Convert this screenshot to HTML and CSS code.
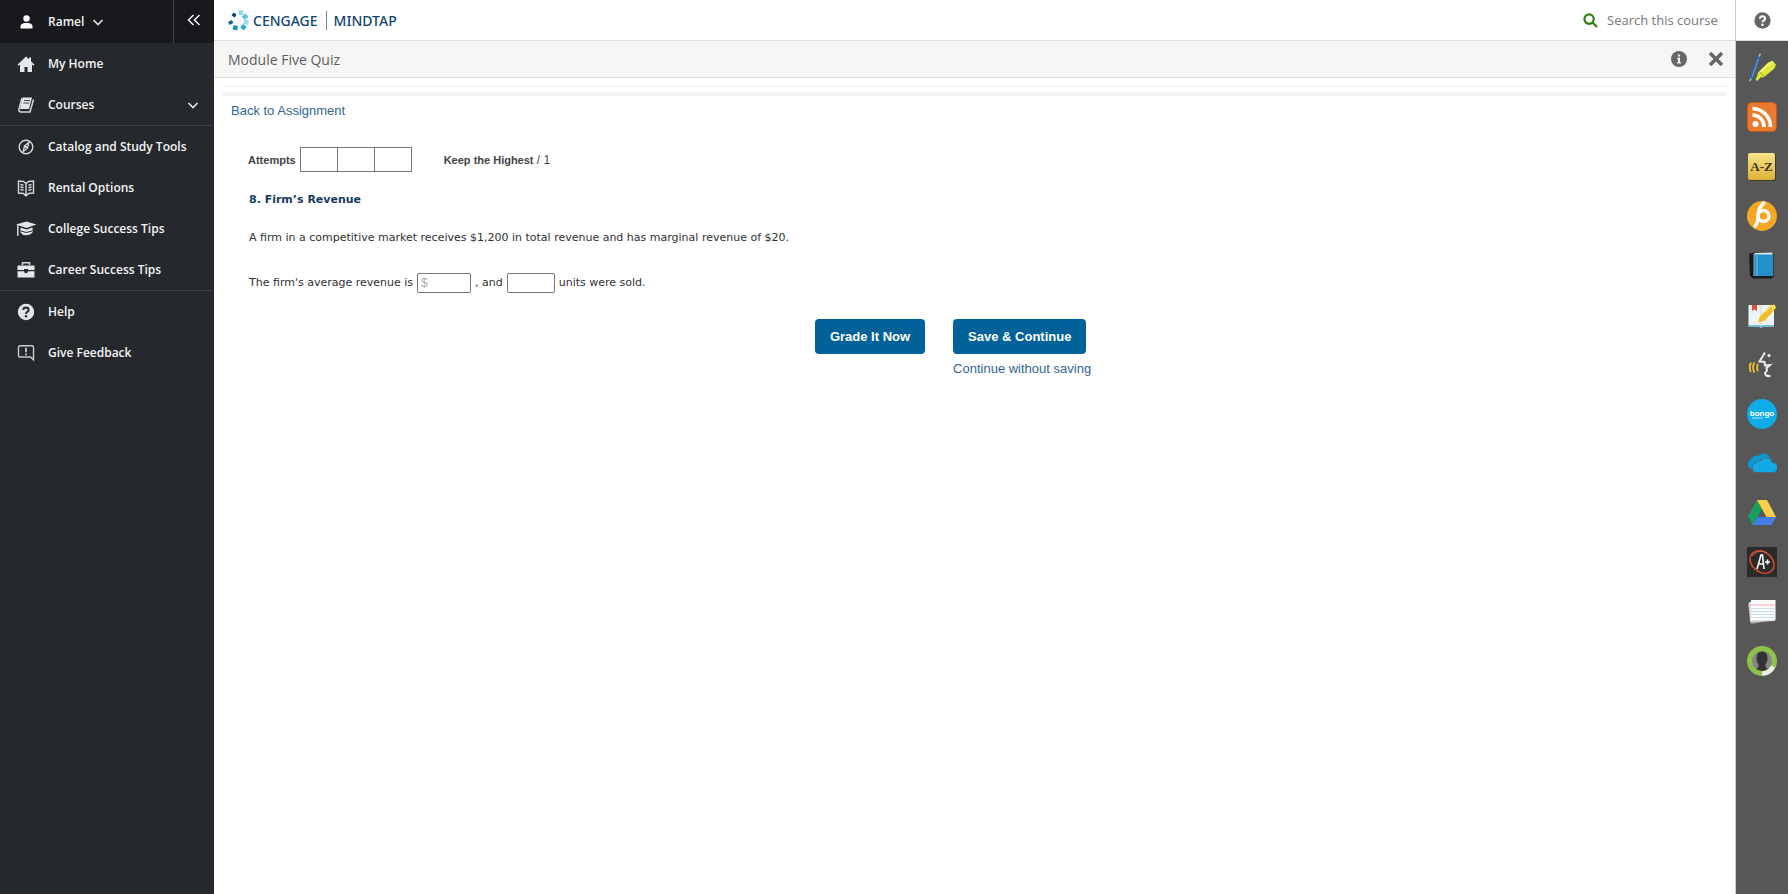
FILE: index.html
```html
<!DOCTYPE html>
<html lang="en">
<head>
<meta charset="utf-8">
<title>Module Five Quiz</title>
<link rel="stylesheet" href="styles.css">
</head>
<body>
<div class="app">
  <nav class="sidebar" aria-label="Main">
    <div class="user-row">
      <button class="user" type="button">
        <svg class="ico" viewBox="0 0 20 20" fill="#fff"><circle cx="10.500" cy="6.500" r="3.200"/><path d="M4.500 16.500v-2q0-3 4-3.500h4q4 .5 4 3.500v2z"/></svg>
        <span>Ramel</span>
        <svg class="chev" viewBox="0 0 12 12"><path d="M1.500 4 6 8.500 10.500 4"/></svg>
      </button>
      <button class="collapse" type="button" aria-label="Collapse menu">
        <svg viewBox="0 0 14 12"><path d="M6.500 1 1.500 6l5 5M12.500 1l-5 5 5 5"/></svg>
      </button>
    </div>
    <ul class="menu">
      <li><a href="#"><svg class="ico" viewBox="0 0 20 20" fill="#e4e6e7"><path d="M10 2.500 1.500 10.800l1 1L4 10.500V18h4.500v-5h3v5H16v-7.500l1.500 1.300 1-1L15 7.200V3.500h-2v1.800z"/></svg><span>My Home</span></a></li>
      <li><a href="#"><svg class="ico" viewBox="0 0 20 20"><path d="M6.500 2.500H16l-3 11.500H4z" fill="#e4e6e7"/><path d="M6 3 3 14q-.5 3 2 3h9l3.500-12.500" fill="none" stroke="#d5d8da" stroke-width="1.500"/><path d="M8 5.500h6M7.400 8h6" stroke="#40464a" stroke-width="1.200"/></svg><span>Courses</span><svg class="chev end" viewBox="0 0 12 12"><path d="M1.500 4 6 8.500 10.500 4"/></svg></a></li>
    </ul>
    <ul class="menu">
      <li><a href="#"><svg class="ico" viewBox="0 0 20 20" fill="none" stroke="#d5d8da" stroke-width="1.400"><circle cx="10" cy="10" r="6.800"/><path d="m12.800 5.500-1.300 5.700-4.300 3.300 1.300-5.700z"/><circle cx="10" cy="10" r=".6"/></svg><span>Catalog and Study Tools</span></a></li>
      <li><a href="#"><svg class="ico" viewBox="0 0 20 20" fill="none" stroke="#d5d8da" stroke-width="1.400"><path d="M10 5.500 7.500 3.500 2.500 3v12l5 .5 2.500 2.500 2.500-2.500 5-.5V3l-5 .5zM10 5.500v12M4.500 6.500l3 .8M4.500 9l3 .8M4.500 11.500l3 .8M12.500 7.300l3-.8M12.500 9.800l3-.8M12.500 12.300l3-.8"/></svg><span>Rental Options</span></a></li>
      <li><a href="#"><svg class="ico" viewBox="0 0 20 20" fill="#e4e6e7"><path d="M10.500 2.500 0 5.500l10.500 3.500L20.500 5.500z"/><path d="M4.500 8.500v5q2 3 6 2.800 4-.2 6-2.800v-5l-6 2z"/><path d="M5 12q5 3 11 0" stroke="#25292d" fill="none"/><path d="M1.800 6v11" stroke="#d5d8da" stroke-width="1.500"/></svg><span>College Success Tips</span></a></li>
      <li><a href="#"><svg class="ico" viewBox="0 0 20 20" fill="#e4e6e7"><path d="M6.500 5V2.800h7V5" fill="none" stroke="#d5d8da" stroke-width="1.500"/><path d="M1.500 5.500h17V10H12V9H8v1H1.500zM1.500 11.200H8q.3 2 2 2t2-2h6.500V17.500h-17z"/></svg><span>Career Success Tips</span></a></li>
    </ul>
    <ul class="menu">
      <li><a href="#"><svg class="ico" viewBox="0 0 20 20"><circle cx="10" cy="10" r="8.200" fill="#e4e6e7"/><path d="M7.300 8Q7.300 5.500 10 5.500T12.700 8Q12.700 9.300 11 10 10 10.500 10 12" stroke="#25292d" stroke-width="1.900" fill="none"/><circle cx="10" cy="14.300" r="1.200" fill="#25292d"/></svg><span>Help</span></a></li>
      <li><a href="#"><svg class="ico" viewBox="0 0 20 20" fill="none" stroke="#c9ccce" stroke-width="1.400"><path d="M4 2.800h12q1.500 0 1.500 1.500v12.500l-3-2.800H4q-1.500 0-1.500-1.500V4.300Q2.500 2.800 4 2.800z"/><path d="M10 4.800v4.500M10 10.500v1.800" stroke-width="1.800"/></svg><span>Give Feedback</span></a></li>
    </ul>
  </nav>

  <main class="main">
    <header class="topbar">
      <a class="brand" href="#">
        <svg class="logo" viewBox="0 0 21 21"><g stroke-width="4.600"><path d="m12.500 0.500.7 4.500" stroke="#8fd6ec"/><path d="m19 5-4 3.200" stroke="#5ec3e3"/><path d="m20.500 13-4.800-1.500" stroke="#9edcf0"/><path d="m17 19-3-3.500" stroke="#2fa5d0"/><path d="m7 20 .7-4.500" stroke="#178fc0"/><path d="m.8 13.500 3.800-2" stroke="#165f96" stroke-width="3.400"/><path d="m4.500 4 3.200 2" stroke="#0d4373" stroke-width="3.400"/></g></svg>
        <span class="brand-name">CENGAGE</span><span class="brand-product">MINDTAP</span>
      </a>
      <div class="search">
        <svg viewBox="0 0 16 16" fill="none" stroke="#36800f" stroke-width="2.400"><circle cx="6.500" cy="6.500" r="5"/><path d="m10 10 5 5"/></svg>
        <input type="text" aria-label="Search this course" placeholder="Search this course">
      </div>
    </header>
    <div class="titlebar">
      <h1>Module Five Quiz</h1>
      <div class="actions">
        <button type="button" aria-label="Information"><svg viewBox="0 0 16 16"><circle cx="8" cy="8" r="8" fill="#666"/><path d="M6.200 6.800H9v4.400h1v1.300H6v-1.300h1V8h-.8zM7 3.500h2v2H7z" fill="#f5f5f5"/></svg></button>
        <button type="button" aria-label="Close"><svg viewBox="0 0 16 16"><path d="m2 2 12 12M14 2 2 14" stroke="#666" stroke-width="3.600"/></svg></button>
      </div>
    </div>
    <div class="rule"></div>
    <section class="content">
      <a class="back" href="#">Back to Assignment</a>
      <div class="attempts">
        <b>Attempts</b>
        <div class="boxes"><span></span><span></span><span></span></div>
        <div><b>Keep the Highest</b> / 1</div>
      </div>
      <form class="question">
        <h2>8. Firm’s Revenue</h2>
        <p>A firm in a competitive market receives $1,200 in total revenue and has marginal revenue of $20.</p>
        <p class="fill"><label for="avg">The firm's average revenue is</label><input id="avg" class="avg" type="text" placeholder="$"><label for="units">, and</label><input id="units" class="units" type="text"><span>units were sold.</span></p>
        <div class="submit">
          <button type="button">Grade It Now</button>
          <div class="save"><button type="button">Save &amp; Continue</button><a href="#">Continue without saving</a></div>
        </div>
      </form>
    </section>
  </main>

  <aside class="rail">
    <button class="rail-help" type="button" aria-label="Help"><svg viewBox="0 0 20 20"><circle cx="10" cy="10" r="9.600" fill="#666"/><path d="M7 8Q7 5 10 5T13 8Q13 9.500 11.300 10.200 10 10.800 10 12.200" stroke="#fff" stroke-width="2.300" fill="none"/><circle cx="10" cy="15" r="1.400" fill="#fff"/></svg></button>
    <div class="apps">
      <button type="button" aria-label="Highlights"><svg viewBox="0 0 30 30"><path d="M12 3.500 4 26" stroke="#3268ad" stroke-width="3.200"/><path d="m12.300 3.500 1-3M4 25.500 3 28" stroke="#bdd3e8" stroke-width="1.200"/><path d="m11.500 6-6.500 18" stroke="#79a5d6" stroke-width=".8"/><path d="m21.500 9.500 4-1.500 3.500 3.500-1.500 4L17 24l-3.500.5-3.500 3.500-1.500-1.500 1.700-3.500.8-3.500z" fill="#d9e63a"/><path d="m21.500 9.500 4-1.500 1.500 1.500-13.500 10.500-2.500-.5z" fill="#eef36d"/><path d="m12 18.500 5.500 5" stroke="#96a51f" stroke-width="1"/></svg></button>
      <button type="button" aria-label="RSS"><svg viewBox="0 0 30 30"><rect width="30" height="30" rx="5" fill="#c95819"/><rect x="1" y="1" width="28" height="28" rx="4" fill="#ea7a30"/><circle cx="8.500" cy="22" r="3" fill="#fff"/><path d="M5.500 13a11.500 11.500 0 0 1 11.500 12M5.500 6.500A18.500 18.500 0 0 1 23.500 25" fill="none" stroke="#fff" stroke-width="3.600"/></svg></button>
      <button type="button" aria-label="Glossary"><svg viewBox="0 0 30 30"><defs><linearGradient id="gold" x2="0" y2="1"><stop stop-color="#f8e489"/><stop offset="1" stop-color="#ddb137"/></linearGradient></defs><rect x="2" y="2" width="27" height="27" rx="2" fill="#3d3928"/><rect x="1" y="1" width="27" height="27" rx="2" fill="url(#gold)"/><text class="az" x="14.500" y="19" text-anchor="middle">A-Z</text></svg></button>
      <button type="button" aria-label="Pathbrite"><svg viewBox="0 0 30 30"><circle cx="15" cy="15" r="15" fill="#f5a623"/><circle cx="16.500" cy="15" r="5.500" fill="none" stroke="#fff" stroke-width="3.400"/><path d="M18 1Q11 6 11 15t-4 11" fill="none" stroke="#fff" stroke-width="3.400"/></svg></button>
      <button type="button" aria-label="Reader"><svg viewBox="0 0 30 30"><path d="M2 3 7 1.500h18l1.500 1.800V26L24 27.500H6L3 25z" fill="#171b1f"/><path d="M7 3h19v22H7z" fill="#258fc7"/><path d="m7 2 18-.5 1 2H8z" fill="#e6e8e9"/><path d="M7 3v22" stroke="#9ca8b0" stroke-width="1"/><path d="M11 3v22h-2V3z" fill="#46a9d8"/></svg></button>
      <button type="button" aria-label="Notes"><svg viewBox="0 0 30 30"><path d="M1.500 5H27v21.500H16l-2 1.200-2-1.200H1.500z" fill="#edf4f6"/><path d="M1.500 25H13l1 1 1-1h12v2H16l-2 1-2-1H1.500z" fill="#78bdd5"/><path d="M14 5v21" stroke="#ccd8dc"/><path d="M5 5h5v6L7.500 9.500 5 11z" fill="#df5440"/><path d="m23 6 4-1.500 2 3-3 4-8 9-7 2 2-6z" fill="#f2bd24"/><path d="m23 6 4-1.500 2 3-3 3z" fill="#ffdf4c"/><path d="m15 14 9-7" stroke="#ffe680"/></svg></button>
      <button type="button" aria-label="ReadSpeaker"><svg viewBox="0 0 30 30" fill="none"><path d="M18 3.500 12.500 12.500l5 .5.500 3.500 5-.5-3.500 3 .5 2.500-2 2.500q0 3.500 5.500 3" stroke="#ececec" stroke-width="2"/><circle cx="22" cy="6.500" r="1.500" fill="#fff"/><g stroke="#eac32d" stroke-width="1.800"><path d="M11 15q-2 3 0 7"/><path d="M7.500 13.500q-3 5 0 10"/><path d="M4 13.500q-2.500 5 0 9.500"/></g></svg></button>
      <button type="button" aria-label="Bongo"><svg viewBox="0 0 30 30"><circle cx="15" cy="15" r="15" fill="#0eadea"/><text class="bongo" x="15" y="17" text-anchor="middle">bongo</text><path d="M5 19h11" stroke="#b9e8fa" stroke-width="1"/></svg></button>
      <button type="button" aria-label="OneDrive"><svg viewBox="0 0 30 30"><path d="M5 21a5 5 0 0 1-1-9.500A5.500 5.500 0 0 1 11 8a7 7 0 0 1 12 2q2 1 2 4l-12 7z" fill="#0c98d1"/><path d="M10 24.500a4.800 4.800 0 0 1-1-9.500 4.500 4.500 0 0 1 5-2.500 6 6 0 0 1 11 2 5 5 0 0 1 1.500 10z" fill="#12a8e2" stroke="#4f6470" stroke-width=".9"/></svg></button>
      <button type="button" aria-label="Google Drive"><svg viewBox="0 0 30 30"><path d="M10 2 1 18.500 5.500 27 15 11z" fill="#16a060"/><path d="M10 2h10l9 17H19.500z" fill="#fbcf4a"/><path d="M10.500 19H29l-4.500 8h-19z" fill="#437ee8"/></svg></button>
      <button type="button" aria-label="Grades"><svg viewBox="0 0 30 30" fill="none"><path d="M0 0h30v30H0z" fill="#2b2b2b"/><ellipse cx="15" cy="15" rx="13" ry="10" transform="rotate(38 15 15)" stroke="#c8482c" stroke-width="1.700"/><path d="M5 9Q11 1 20 6" stroke="#dd6848"/><path d="m10 22 4-14h1.500l1.500 14M11 17h6M18 15h5M20.500 12.500v5" stroke="#fff" stroke-width="1.600"/></svg></button>
      <button type="button" aria-label="Flashcards"><svg viewBox="0 0 30 30"><path d="m1 8 3-2 22 18-22 4z" fill="#aaa"/><path d="m2 6 25-1 1 20-25 1z" fill="#ddd"/><path d="M4 4h24.500v20H4z" fill="#fcfcfc"/><path d="M4 9h24.500" stroke="#efa8a8"/><path d="M4 12.500h24.500M4 15.500h24.500M4 18.500h24.500M4 21.500h24.500" stroke="#c4dfee"/></svg></button>
      <button type="button" aria-label="Profile"><svg viewBox="0 0 30 30"><circle cx="15" cy="15" r="10.500" fill="#858585"/><path d="M9.500 12Q9.500 5.500 15 5.500t5.500 6.500q0 4-2 6v3l3 2.500q-6.500 4-13 0l3-2.500v-3q-2-2-2-6z" fill="#333"/><circle cx="15" cy="15" r="12.500" fill="none" stroke="#8bc34a" stroke-width="5"/><path d="M26.200 20.500A12.500 12.500 0 0 1 15 27.500" fill="none" stroke="#ececec" stroke-width="4.500"/></svg></button>
    </div>
  </aside>
</div>
</body>
</html>
```
FILE: styles.css
```css
* { box-sizing: border-box; }
body { margin: 0; background: #fff; font-family: "Open Sans", sans-serif; }
button { border: 0; padding: 0; background: none; font: inherit; color: inherit; cursor: pointer; }
a { text-decoration: none; }
svg { display: block; flex: none; }

.app { display: grid; grid-template-columns: 214px minmax(0, 1fr) 53px; min-height: 100vh; }

.sidebar { background: #25292d; color: #f4f4f4; font-size: 12px; font-weight: 600; }
.user-row { display: flex; height: 43px; background: #18191d; }
.user { display: flex; align-items: center; flex: 1; padding-left: 16px; }
.user span { padding-left: 12px; }
.ico { width: 20px; height: 20px; overflow: visible; }
.chev { width: 12px; height: 12px; margin-left: 8px; fill: none; stroke: #e4e6e7; stroke-width: 1.6; }
.chev.end { margin-left: auto; }
.collapse { display: flex; align-items: center; justify-content: center; width: 41px; padding-bottom: 3px; border-left: 1px solid #43474b; }
.collapse svg { width: 14px; height: 12px; fill: none; stroke: #eee; stroke-width: 1.6; }
.menu { list-style: none; margin: 0; padding: 0; }
.menu + .menu { border-top: 1px solid #3c4145; }
.menu a { display: flex; align-items: center; height: 41px; padding: 0 15px 0 16px; color: inherit; }
.menu span { padding-left: 12px; }

.main { min-width: 0; }
.topbar { display: flex; align-items: center; justify-content: space-between; height: 41px; padding: 0 12px 0 14px; border-bottom: 1px solid #ddd; }
.brand { display: flex; align-items: center; color: #12456f; font-family: "Noto Sans", sans-serif; font-size: 14px; font-weight: 500; }
.logo { width: 21px; height: 21px; margin-right: 4px; }
.brand-product { margin-left: 8px; padding-left: 7px; border-left: 1px solid #6b8ba6; }
.search { display: flex; align-items: center; gap: 9px; }
.search svg { width: 15px; height: 15px; }
.search input { width: 116px; padding: 0; border: 0; outline: 0; background: none; font: 13px "Open Sans", sans-serif; }
.search input::placeholder { color: #777; }
.titlebar { display: flex; align-items: center; justify-content: space-between; height: 37px; padding: 0 11px 0 14px; background: #f6f6f6; border-bottom: 1px solid #ddd; }
.titlebar h1 { margin: 0; color: #5c5c5c; font-size: 14px; font-weight: 400; }
.actions { display: flex; gap: 21px; }
.actions svg { width: 16px; height: 16px; }
.rule { height: 10px; margin: 8px 8px 0; border-top: 1px solid #e8eff3; background: linear-gradient(#fff 40%, #f1f4f6 60%); }

.content { padding: 7px 17px; font: 12px "Liberation Sans", sans-serif; color: #444; }
.content a { color: #33658f; font-size: 13px; line-height: 16px; }
.back { display: block; }
.attempts { display: flex; align-items: center; margin-top: 28px; padding-left: 17px; }
.attempts b { font-size: 11px; }
.boxes { display: flex; margin: 0 32px 0 4px; }
.boxes span { width: 38px; height: 25px; border: 1px solid #777; }
.boxes span + span { margin-left: -1px; }
.question { padding-left: 18px; color: #303030; font: 11px/16px "DejaVu Sans", sans-serif; }
.question h2 { margin: 20px 0 0; color: #17395f; font-size: 11px; line-height: 16px; }
.question p { margin: 22px 0 0; }
.question .fill { display: flex; align-items: center; gap: 4px; margin-top: 27px; }
.fill input { height: 20px; padding: 0 3px; border: 1px solid #777; border-radius: 2px; font: 12px "Liberation Sans", sans-serif; }
.fill input::placeholder { color: #aaa; }
.fill .avg { width: 54px; }
.fill .units { width: 48px; }
.submit { display: flex; align-items: flex-start; justify-content: center; gap: 28px; margin-top: 26px; padding-right: 61px; }
.submit button { height: 35px; padding: 0 15px; border-radius: 4px; background: #006298; color: #fff; font: bold 13px "Liberation Sans", sans-serif; }
.save { display: flex; flex-direction: column; align-items: flex-start; gap: 7px; }
.save a { font-family: "Liberation Sans", sans-serif; }

.rail { border-left: 1px solid #ccc; background: #575757; }
.rail-help { display: flex; align-items: center; justify-content: center; width: 100%; height: 41px; background: #fff; border-bottom: 1px solid #ddd; }
.rail-help svg { width: 17px; height: 17px; }
.apps { display: flex; flex-direction: column; align-items: center; justify-content: space-between; height: 635px; padding-top: 12px; margin-bottom: 24px; }
.apps svg { width: 30px; height: 30px; }
.az { font: bold 13px "Liberation Serif", serif; fill: #39341f; }
.bongo { font: bold 8px "Liberation Sans", sans-serif; fill: #fff; }
```
